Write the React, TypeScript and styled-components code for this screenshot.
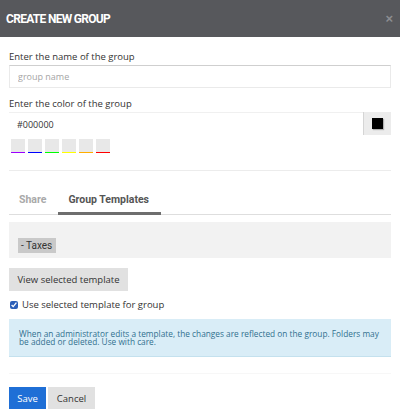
import React, { useState } from "react";
import styled, { createGlobalStyle } from "styled-components";

const GlobalStyle = createGlobalStyle`
  html, body {
    margin: 0;
    padding: 0;
    background: #ffffff;
  }
  * {
    box-sizing: border-box;
  }
`;

const palette = {
  header: "#57585c",
  border: "#dedede",
  muted: "#f2f2f2",
  btn: "#e1e1e1",
  text: "#333333",
  blue: "#1f6fd6",
  infoBg: "#d9edf7",
  infoText: "#31708f",
};

const Modal = styled.div`
  width: 400px;
  height: 414px;
  background: #fff;
  font-family: "Open Sans", "Liberation Sans", sans-serif;
  color: ${palette.text};
  display: flex;
  flex-direction: column;
`;

const Header = styled.div`
  height: 37px;
  background: ${palette.header};
  display: flex;
  align-items: center;
  justify-content: space-between;
  padding: 0 7px 0 6px;
  flex-shrink: 0;
`;

const Title = styled.h1`
  margin: 0;
  font-family: Roboto, "Liberation Sans", sans-serif;
  font-weight: 700;
  font-size: 12px;
  letter-spacing: -0.7px;
  color: #ffffff;
`;

const Close = styled.span`
  font-family: "Liberation Sans", sans-serif;
  font-weight: 700;
  font-size: 13px;
  color: #8c8d91;
  line-height: 1;
`;

const Body = styled.div`
  padding: 13px 9px 0 9px;
  display: flex;
  flex-direction: column;
`;

const Label = styled.label`
  font-size: 9.5px;
  line-height: 13px;
  display: block;
  margin-bottom: 2px;
`;

const TextInput = styled.input`
  width: 100%;
  height: 23px;
  border: 1px solid #eaeaea;
  border-top-color: #cfcfcf;
  padding: 0 8px;
  font-family: "Open Sans", "Liberation Sans", sans-serif;
  font-size: 9px;
  color: ${palette.text};
  outline: none;
  margin-bottom: 9px;
  &::placeholder {
    color: #a5a5a5;
  }
`;

const ColorRow = styled.div`
  display: flex;
  height: 23px;
`;

const ColorInput = styled.div`
  flex: 1;
  border-top: 1px solid #f0f0f0;
  display: flex;
  align-items: center;
  padding: 0 8px;
  font-size: 9px;
`;

const ColorButton = styled.div`
  width: 28px;
  background: #ececec;
  border-left: 1px solid #d5d5d5;
  display: flex;
  align-items: center;
  justify-content: center;
`;

const ColorChip = styled.div<{ $color: string }>`
  width: 11px;
  height: 11px;
  background: ${(p) => p.$color};
  box-shadow: 1px 1px 1px rgba(0, 0, 0, 0.25);
`;

const Swatches = styled.div`
  display: flex;
  gap: 3px;
  padding: 4px 0 0 2px;
`;

const Swatch = styled.div<{ $line: string }>`
  width: 14px;
  height: 14px;
  background: #e8e8e8;
  border-bottom: 1px solid ${(p) => p.$line};
`;

const Divider = styled.hr`
  border: none;
  border-top: 1px solid #ececec;
  margin: 17px 0 0 0;
`;

const Tabs = styled.div`
  display: flex;
  margin-top: 22px;
  border-bottom: 1px solid ${palette.border};
`;

const Tab = styled.div<{ $active?: boolean }>`
  font-family: Roboto, "Liberation Sans", sans-serif;
  font-weight: 700;
  font-size: 10.5px;
  color: ${(p) => (p.$active ? "#555" : "#a9a9a9")};
  padding: 0 12px 6px 10px;
  border-bottom: 3px solid ${(p) => (p.$active ? "#6e6e6e" : "transparent")};
  margin-bottom: -1px;
`;

const TemplatePanel = styled.div`
  background: ${palette.muted};
  margin-top: 7px;
  height: 36px;
  padding: 10px 9px;
`;

const Tag = styled.span`
  display: inline-block;
  background: #c9c9c9;
  font-family: Roboto, "Liberation Sans", sans-serif;
  font-size: 10px;
  line-height: 15px;
  padding: 0 4px 0 3px;
  color: #333;
`;

const Button = styled.button<{ $primary?: boolean }>`
  border: none;
  height: 22px;
  padding: 0 8px;
  font-family: "Open Sans", "Liberation Sans", sans-serif;
  font-size: 9.5px;
  background: ${(p) => (p.$primary ? palette.blue : palette.btn)};
  color: ${(p) => (p.$primary ? "#ffffff" : palette.text)};
  cursor: pointer;
`;

const ViewButton = styled(Button)`
  align-self: flex-start;
  margin-top: 10px;
  width: 119px;
  height: 23px;
`;

const CheckRow = styled.label`
  display: flex;
  align-items: center;
  gap: 4px;
  margin-top: 7px;
  font-size: 9.5px;
  padding-left: 1px;
`;

const Check = styled.input`
  margin: 0;
  width: 8px;
  height: 8px;
  accent-color: #2c5fb8;
`;

const Info = styled.div`
  margin-top: 8px;
  background: ${palette.infoBg};
  color: ${palette.infoText};
  font-size: 8.3px;
  line-height: 8px;
  padding: 11px 10px 10px 10px;
  border-bottom: 1px solid #c4e1ee;
`;

const FooterLine = styled.div`
  border-top: 1px solid #f7f7f7;
  margin-top: 16px;
`;

const Footer = styled.div`
  display: flex;
  gap: 2px;
  margin-top: 13px;
`;

const SaveButton = styled(Button)`
  width: 37px;
`;

const CancelButton = styled(Button)`
  width: 47px;
`;

const swatchLines = ["#9b00ff", "#0000ff", "#00ff00", "#ffff00", "#ffae00", "#ff0000"];

export default function App() {
  const [useTemplate, setUseTemplate] = useState(true);

  return (
    <>
      <GlobalStyle />
      <Modal>
        <Header>
          <Title>CREATE NEW GROUP</Title>
          <Close>×</Close>
        </Header>
        <Body>
          <Label>Enter the name of the group</Label>
          <TextInput placeholder="group name" />

          <Label>Enter the color of the group</Label>
          <ColorRow>
            <ColorInput>#000000</ColorInput>
            <ColorButton>
              <ColorChip $color="#000000" />
            </ColorButton>
          </ColorRow>
          <Swatches>
            {swatchLines.map((c) => (
              <Swatch key={c} $line={c} />
            ))}
          </Swatches>

          <Divider />

          <Tabs>
            <Tab>Share</Tab>
            <Tab $active>Group Templates</Tab>
          </Tabs>

          <TemplatePanel>
            <Tag>- Taxes</Tag>
          </TemplatePanel>

          <ViewButton>View selected template</ViewButton>

          <CheckRow>
            <Check
              type="checkbox"
              checked={useTemplate}
              onChange={() => setUseTemplate(!useTemplate)}
            />
            Use selected template for group
          </CheckRow>

          <Info>
            When an administrator edits a template, the changes are reflected on the group. Folders may
            be added or deleted. Use with care.
          </Info>

          <FooterLine />

          <Footer>
            <SaveButton $primary>Save</SaveButton>
            <CancelButton>Cancel</CancelButton>
          </Footer>
        </Body>
      </Modal>
    </>
  );
}
